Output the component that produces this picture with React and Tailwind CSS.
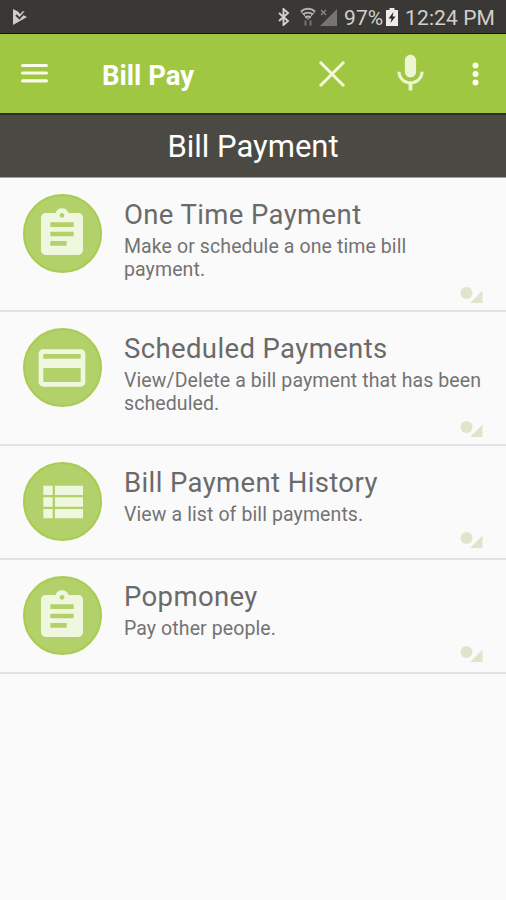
import React from 'react';

const CLIPBOARD =
    'M19 3h-4.18C14.4 1.84 13.3 1 12 1c-1.3 0-2.4.84-2.82 2H5c-1.1 0-2 .9-2 2v14c0 1.1.9 2 2 2h14c1.1 0 2-.9 2-2V5c0-1.1-.9-2-2-2zm-7 0c.55 0 1 .45 1 1s-.45 1-1 1-1-.45-1-1 .45-1 1-1zm2 14H7v-2h7v2zm3-4H7v-2h10v2zm0-4H7V7h10v2z';
const CARD =
    'M20 4H4c-1.11 0-1.99.89-1.99 2L2 18c0 1.11.89 2 2 2h16c1.11 0 2-.89 2-2V6c0-1.11-.89-2-2-2zm0 14H4v-6h16v6zm0-10H4V6h16v2z';
const LIST =
    'M4 14h4v-4H4v4zm0 5h4v-4H4v4zM4 9h4V5H4v4zm5 5h12v-4H9v4zm0 5h12v-4H9v4zM9 5v4h12V5H9z';

const items = [
    {
        title: 'One Time Payment',
        description: 'Make or schedule a one time bill payment.',
        icon: CLIPBOARD,
        height: 'h-[134px] pb-[7px]'
    },
    {
        title: 'Scheduled Payments',
        description: 'View/Delete a bill payment that has been scheduled.',
        icon: CARD,
        height: 'h-[134px] pb-[7px]'
    },
    {
        title: 'Bill Payment History',
        description: 'View a list of bill payments.',
        icon: LIST,
        height: 'h-[114px] pb-[10px]'
    },
    {
        title: 'Popmoney',
        description: 'Pay other people.',
        icon: CLIPBOARD,
        height: 'h-[114px] pb-[10px]'
    }
];

function StatusBar() {
    return (
        <div className="flex h-[34px] items-center border-b border-[#1d0d1c] bg-[#3a3835] pr-[11px] pl-3 text-[#d2d0cd]">
            <svg className="h-[18px] w-4" viewBox="0 0 16 18">
                <path d="M1 1l5 2.500 2 2.500 3-3 2 1-2 3 4 2L1 17z" fill="#cfcdca" />
                <path d="M4 7l3.500 3.500L13 4" fill="none" stroke="#3a3835" strokeWidth="1.800" />
            </svg>
            <div className="ml-auto flex items-center">
                <svg className="h-[18px] w-[14px]" viewBox="0 0 14 18" fill="none" stroke="currentColor" strokeWidth="1.900">
                    <path d="M2 5l9 8-4.500 4V1L11 5l-9 8" />
                </svg>
                <svg className="ml-[9px] h-5 w-4" viewBox="0 0 16 20" fill="none" stroke="#b5b3b0" strokeWidth="2">
                    <path d="M1 4.500c4-3.600 10-3.600 14 0M3 7.600c3-2.600 7-2.600 10 0M5.300 10.600c1.700-1.300 3.700-1.300 5.400 0" />
                    <path d="M1 4.500l7 8 7-8" strokeWidth="1" />
                    <path d="M5.500 13.500v5M10.500 13.500v5" stroke="#777572" />
                </svg>
                <svg className="ml-1 h-[18px] w-[17px]" viewBox="0 0 17 18">
                    <path d="M17 1v17H0z" fill="#777572" />
                    <path d="M1 2l5 5M6 2L1 7" stroke="#8b8986" strokeWidth="1.300" />
                </svg>
                <span className="mt-[3px] ml-[7px] text-[21px] leading-5">97%</span>
                <svg className="ml-[3px] h-[18px] w-3" viewBox="0 0 12 18">
                    <path d="M3.500 0h5v2H12v16H0V2h3.500z" fill="#eeecea" />
                    <path d="M7.500 4L2.500 10.500h3L4.500 15l5-6.500h-3z" fill="#2b2927" />
                </svg>
                <span className="mt-[3px] ml-[7px] text-[21px] leading-5 tracking-[0.1px]">12:24 PM</span>
            </div>
        </div>
    );
}

function AppBar() {
    return (
        <header className="flex h-[79px] items-center bg-[#a0c741] pr-[27px] pl-[21px] text-white">
            <svg className="mb-[2px] h-5 w-[27px]" viewBox="0 0 27 20" fill="none" stroke="#f9fceb" strokeWidth="3.200" strokeLinecap="round">
                <path d="M1.600 2.500h23.800M1.600 10h23.800M1.600 17.800h23.800" />
            </svg>
            <h1 className="mt-[4px] ml-[54px] text-[27.5px] leading-8 font-bold">Bill Pay</h1>
            <svg className="ml-auto h-[26px] w-[26px]" viewBox="0 0 26 26" fill="none" stroke="#f3f9dc" strokeWidth="3">
                <path d="M1 1l24 24M25 1L1 25" />
            </svg>
            <svg className="ml-[43px] h-[45px] w-[45px]" viewBox="0 0 24 24" fill="#edf5d3">
                <path d="M12 14c1.660 0 2.990-1.340 2.990-3L15 5c0-1.660-1.340-3-3-3S9 3.340 9 5v6c0 1.660 1.340 3 3 3zm5.300-3c0 3-2.540 5.100-5.300 5.100S6.700 14 6.700 11H5c0 3.410 2.720 6.230 6 6.720V21h2v-3.280c3.280-.480 6-3.300 6-6.720h-1.700z" />
            </svg>
            <svg className="ml-[39px] h-6 w-[7px]" viewBox="0 0 7 24" fill="#fbfdf2">
                <circle cx="3.500" cy="3.500" r="3" />
                <circle cx="3.500" cy="12" r="3" />
                <circle cx="3.500" cy="20.500" r="3" />
            </svg>
        </header>
    );
}

function MenuItem({ item }) {
    return (
        <li className={`flex border-b-2 border-[#e3e3e4] pt-4 pl-[23px] ${item.height}`}>
            <div className="flex h-[79px] w-[79px] shrink-0 items-center justify-center rounded-full border-2 border-[#a9cb53] bg-[#b3d16b] pr-px">
                <svg className="h-14 w-14 shrink-0" viewBox="0 0 24 24" fill="#eff7de">
                    <path d={item.icon} />
                </svg>
            </div>
            <div className="ml-[22px] flex flex-1 flex-col">
                <h3 className="mt-[5px] text-[27.5px] leading-8 tracking-[0.38px] text-[#6a6a6a]">{item.title}</h3>
                <p className="mt-1 pr-5 text-[19.5px] leading-[23px] tracking-[0.1px] text-[#737373]">{item.description}</p>
                <svg className="mt-auto mr-[23px] h-4 w-[23px] shrink-0 self-end" viewBox="0 0 23 16" fill="#dfe5cc">
                    <circle cx="6.500" cy="6" r="6" />
                    <path d="M22.500 3.500V16H10z" />
                </svg>
            </div>
        </li>
    );
}

export default function App() {
    return (
        <div className="h-[900px] w-[506px] overflow-hidden bg-[#fafafa] font-['Roboto',sans-serif]">
            <StatusBar />
            <AppBar />
            <div className="flex h-[65px] items-center justify-center border-t-2 border-b border-t-[#2e2d27] border-b-[#a3a29f] bg-[#4b4943]">
                <h2 className="mt-px text-[31px] leading-9 text-white">Bill Payment</h2>
            </div>
            <ul>
                {items.map((item) => (
                    <MenuItem key={item.title} item={item} />
                ))}
            </ul>
        </div>
    );
}
